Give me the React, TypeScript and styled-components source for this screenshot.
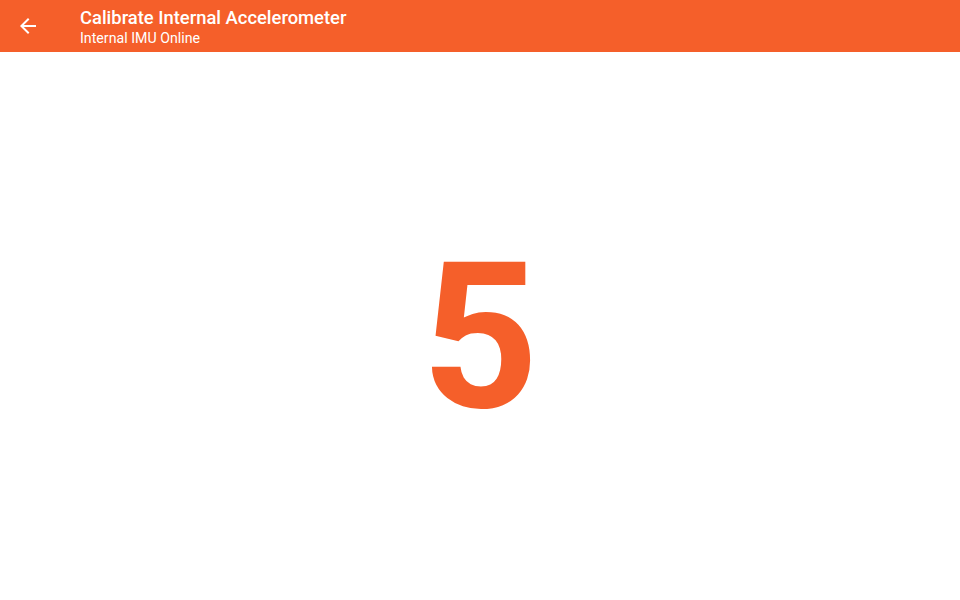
import React from "react";
import styled, { createGlobalStyle } from "styled-components";

const Global = createGlobalStyle`
  html, body {
    margin: 0;
    padding: 0;
    background: #ffffff;
  }
  #root {
    height: 100vh;
  }
`;

const Page = styled.div`
  display: flex;
  flex-direction: column;
  height: 100vh;
  background: #ffffff;
`;

const AppBar = styled.header`
  display: flex;
  align-items: center;
  height: 52px;
  background-color: #f55f2a;
  color: #ffffff;
  flex-shrink: 0;
`;

const BackButton = styled.button`
  display: flex;
  align-items: center;
  justify-content: center;
  width: 24px;
  height: 24px;
  margin: 0 40px 0 16px;
  padding: 0;
  border: none;
  background: none;
  color: #ffffff;
  cursor: pointer;
`;

const Titles = styled.div`
  display: flex;
  flex-direction: column;
  font-family: Roboto, "Noto Sans", sans-serif;
  padding-top: 2px;
`;

const Title = styled.h1`
  margin: 0;
  font-size: 18.4px;
  font-weight: 500;
  line-height: 22px;
`;

const Subtitle = styled.span`
  font-size: 14.2px;
  font-weight: 400;
  line-height: 18px;
`;

const Body = styled.main`
  flex: 1;
  display: flex;
  align-items: center;
  justify-content: center;
`;

const Countdown = styled.div`
  font-family: Roboto, "Liberation Sans", sans-serif;
  font-weight: 700;
  font-size: 204px;
  line-height: 1;
  color: #f55f2a;
  margin-top: 24px;
`;

function App() {
  return (
    <>
      <Global />
      <Page>
        <AppBar>
          <BackButton aria-label="Back">
            <svg width="24" height="24" viewBox="0 0 24 24" fill="currentColor">
              <path d="M20 11H7.83l5.59-5.59L12 4l-8 8 8 8 1.41-1.41L7.83 13H20v-2z" />
            </svg>
          </BackButton>
          <Titles>
            <Title>Calibrate Internal Accelerometer</Title>
            <Subtitle>Internal IMU Online</Subtitle>
          </Titles>
        </AppBar>
        <Body>
          <Countdown>5</Countdown>
        </Body>
      </Page>
    </>
  );
}

export default App;
